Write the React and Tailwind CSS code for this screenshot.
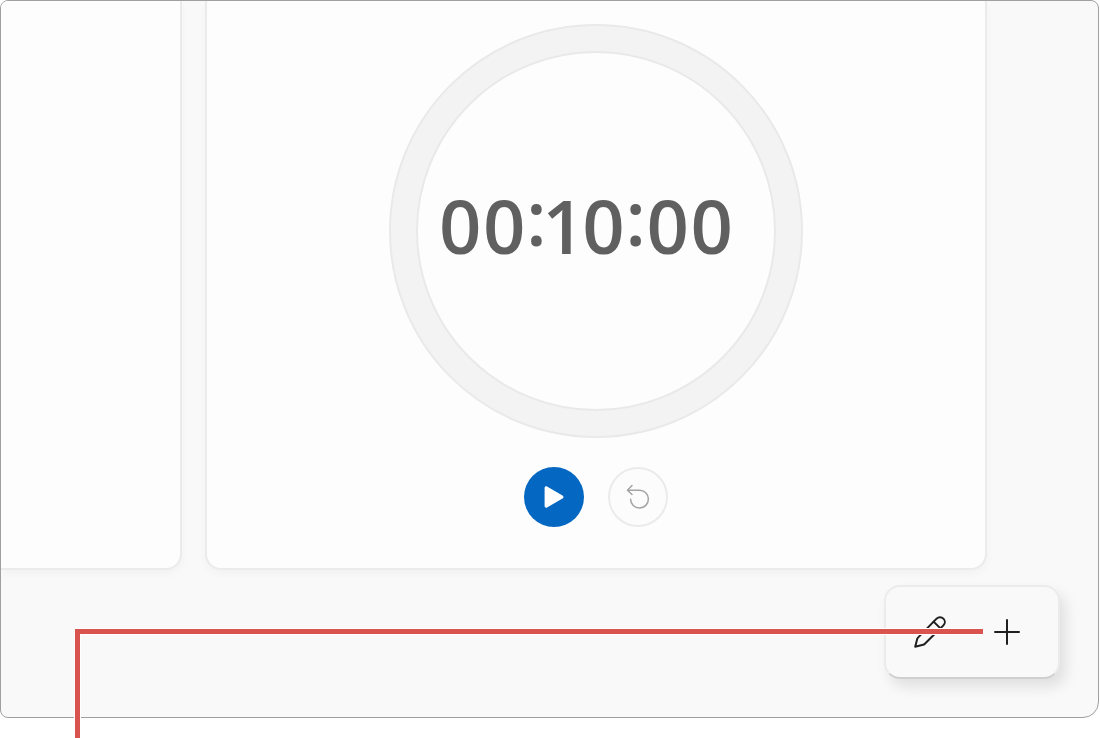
import React, { useState } from 'react';

const PlayIcon = () => (
  <svg viewBox="0 0 20 22" className="w-5 h-[22px]" fill="currentColor" aria-hidden="true">
    <path d="M.6 2C.6.6 1.9-.1 3 .5l15.5 8.9c1.3.7 1.3 2.5 0 3.2L3 21.5C1.9 22.1.6 21.4.6 20z" />
  </svg>
);

const ResetIcon = () => (
  <svg
    viewBox="0 0 24 26"
    className="w-6 h-[26px]"
    fill="none"
    stroke="currentColor"
    strokeWidth="1.5"
    strokeLinecap="round"
    strokeLinejoin="round"
    aria-hidden="true"
  >
    <path d="M6 1.5L1.5 6.2L6 10.5" />
    <path d="M1.8 6.2H13.5A8.9 8.9 0 1 1 4.6 15.2" />
  </svg>
);

const PencilIcon = () => (
  <svg
    viewBox="0 0 32 32"
    className="w-8 h-8"
    fill="none"
    stroke="currentColor"
    strokeWidth="2"
    strokeLinecap="round"
    strokeLinejoin="round"
    aria-hidden="true"
  >
    <path d="M22.6 2.6a4.8 4.8 0 0 1 6.8 6.8L10.6 28q-.6.6-1.5.8L1.2 30.8l2-7.7q.2-.9.8-1.5z" />
    <path d="M19.6 5.6L26.4 12.4" />
  </svg>
);

const PlusIcon = () => (
  <svg
    viewBox="0 0 26 26"
    className="w-[26px] h-[26px]"
    fill="none"
    stroke="currentColor"
    strokeWidth="2"
    strokeLinecap="round"
    aria-hidden="true"
  >
    <path d="M13 1v24M1 13h24" />
  </svg>
);

const TimerCard = () => {
  const [running, setRunning] = useState(false);
  const parts = ['00', '10', '00'];

  return (
    <section className="flex-1 flex flex-col items-center pt-[23px] pb-[41px] bg-[#fdfdfd] border-2 border-t-0 border-[#ebebeb] rounded-b-2xl shadow-[0_4px_10px_rgba(0,0,0,0.03)]">
      {/* Dial */}
      <div className="w-[414px] aspect-square rounded-full border-2 border-[#e9e9e9] bg-[#f3f3f3] p-[25px]">
        <div className="w-full h-full rounded-full border-2 border-[#e9e9e9] bg-[#fdfdfd] flex items-center justify-center pr-5 pb-2.5">
          <time className="flex items-center font-['Open_Sans',sans-serif] font-semibold text-[74px] leading-none text-[#606060] proportional-nums">
            {parts.map((part, index) => (
              <React.Fragment key={index}>
                {index > 0 && <span className="pb-4">:</span>}
                <span>{part}</span>
              </React.Fragment>
            ))}
          </time>
        </div>
      </div>

      {/* Controls */}
      <div className="flex gap-6 mt-[29px]">
        <button
          aria-label="Start"
          onClick={() => setRunning(!running)}
          className="w-[60px] h-[60px] rounded-full bg-[#0467c2] text-white flex items-center justify-center"
        >
          <PlayIcon />
        </button>
        <button
          aria-label="Reset"
          onClick={() => setRunning(false)}
          className="w-[60px] h-[60px] rounded-full border-2 border-[#ebebeb] bg-[#fcfcfc] text-[#a3a3a3] flex items-center justify-center"
        >
          <ResetIcon />
        </button>
      </div>
    </section>
  );
};

const App = () => {
  return (
    <div className="relative min-h-screen bg-white pr-px">
      <main className="border border-[#a0a0a0] rounded-lg rounded-br-2xl bg-[#f9f9f9] overflow-hidden">
        <div className="flex gap-[23px] pr-[111px]">
          <section className="w-[181px] shrink-0 bg-[#fdfdfd] border-r-2 border-b-2 border-[#ebebeb] rounded-br-2xl shadow-[0_4px_10px_rgba(0,0,0,0.03)]" />
          <TimerCard />
        </div>

        <div className="flex justify-end pt-[15px] pr-[38px] pb-[38px]">
          <div className="flex items-center gap-12 px-7 h-[94px] bg-[#f9f9f9] border-2 border-[#ebebeb] border-b-[#cfd0d2] rounded-2xl text-[#1f1f1f] shadow-[6px_8px_14px_rgba(0,0,0,0.1)]">
            <button aria-label="Edit timers">
              <PencilIcon />
            </button>
            <button aria-label="Add new timer" className="pr-2.5">
              <PlusIcon />
            </button>
          </div>
        </div>
      </main>

      {/* Callout line pointing to the add button */}
      <div className="absolute left-[75px] right-[117px] top-[629px] bottom-0 border-t-[5px] border-l-[5px] border-[#d9534f] pointer-events-none shadow-[-1px_-1px_0_#fff,inset_1px_1px_0_#fff]" />
    </div>
  );
};

export default App;
